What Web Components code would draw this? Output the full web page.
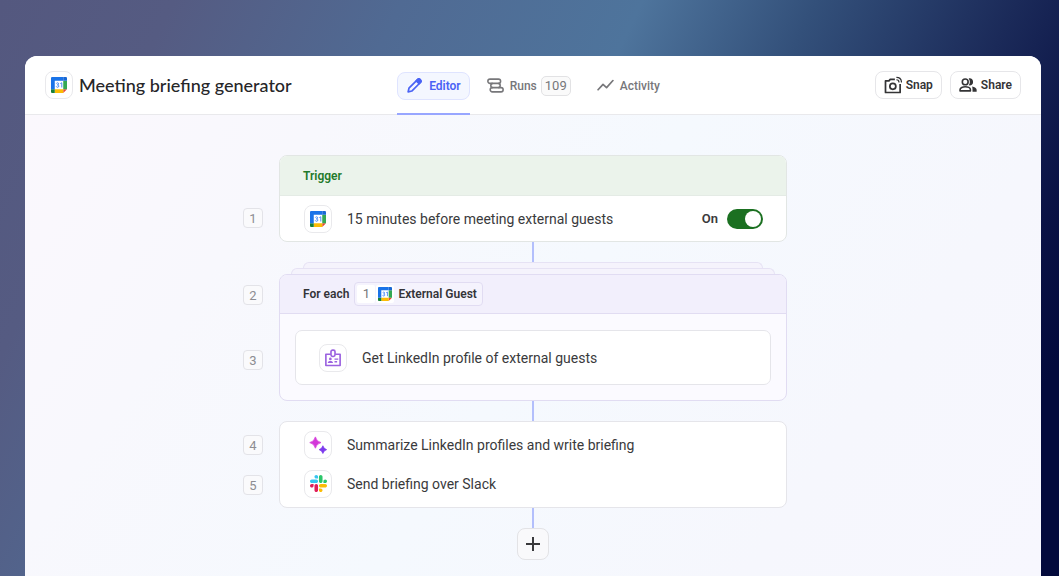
<!DOCTYPE html>
<html lang="en">
<head>
<meta charset="utf-8">
<meta name="viewport" content="width=device-width, initial-scale=1">
<title>Meeting briefing generator</title>
<style>
  html, body { margin: 0; }
  body {
    font-family: Roboto, "Noto Sans", sans-serif;
    font-size: 14px;
    line-height: 20px;
    color: #3a3a3c;
  }
</style>
</head>
<body>
<workflow-window>
  <window-header slot="header">
    <icon-tile slot="title" name="calendar"></icon-tile>
    <span slot="title">Meeting briefing generator</span>
    <nav-tab slot="tabs" icon="pencil" active>Editor</nav-tab>
    <nav-tab slot="tabs" icon="runs" count="109">Runs</nav-tab>
    <nav-tab slot="tabs" icon="activity">Activity</nav-tab>
    <action-button slot="actions" icon="snap">Snap</action-button>
    <action-button slot="actions" icon="share">Share</action-button>
  </window-header>

  <flow-block numbers="1" kind="trigger">
    <flow-card tone="green">
      <span slot="heading">Trigger</span>
      <step-row icon="calendar">15 minutes before meeting external guests
        <toggle-switch slot="end" checked>On</toggle-switch>
      </step-row>
    </flow-card>
  </flow-block>
  <flow-connector></flow-connector>
  <flow-block numbers="2 3" kind="loop">
    <flow-card tone="purple" stacked>
      <span slot="heading">For each</span>
      <value-token slot="heading" step="1" icon="calendar">External Guest</value-token>
      <step-row icon="badge" boxed>Get LinkedIn profile of external guests</step-row>
    </flow-card>
  </flow-block>
  <flow-connector></flow-connector>
  <flow-block numbers="4 5" kind="steps">
    <flow-card>
      <step-row icon="sparkle" compact>Summarize LinkedIn profiles and write briefing</step-row>
      <step-row icon="slack" compact>Send briefing over Slack</step-row>
    </flow-card>
  </flow-block>
  <flow-connector></flow-connector>
  <add-step></add-step>
</workflow-window>

<script>
const ICONS = {
  calendar: `<svg viewBox="0 0 200 200"><path fill="#fff" d="M47 47h106v106H47z"/><path fill="#ea4335" d="M153 200l47-47h-47z"/><path fill="#34a853" d="M200 47h-47v106h47z"/><path fill="#fbbc04" d="M153 153H47v47h106z"/><path fill="#188038" d="M0 153v31c0 9 7 16 16 16h31v-47z"/><path fill="#1967d2" d="M200 47V16c0-9-7-16-16-16h-31v47z"/><path fill="#1a73e8" d="M153 0H16C7 0 0 7 0 16v137h47V47h106z"/><path fill="none" stroke="#4285f4" stroke-width="12" d="M67 82c4-13 29-13 29 4 0 9-8 13-17 13 10 0 19 5 19 15 0 19-29 19-33 3M117 82l18-10v59"/></svg>`,
  pencil: `<svg viewBox="0 0 24 24" fill="none" stroke="currentColor" stroke-width="2.4" stroke-linejoin="round"><path d="M3 21l1.2-5.2L16.600 3.400a2.200 2.200 0 0 1 3.100 0l.9.9a2.200 2.200 0 0 1 0 3.100L8.200 19.800z"/><path fill="currentColor" d="M14.500 5.500l2.600-2.500c1.500-1.200 5.200 2.500 3.900 3.900l-2.500 2.600z"/></svg>`,
  runs: `<svg viewBox="0 0 24 24" fill="none" stroke="currentColor" stroke-width="2.2"><rect x="1.200" y="3" width="18" height="6" rx="3"/><rect x="4.500" y="15" width="18.300" height="6" rx="3"/><path d="M16 9c3.500.3 3.500 5.700 0 6M8 9c-3.500.3-3.500 5.700 0 6"/></svg>`,
  activity: `<svg viewBox="0 0 24 24" fill="none" stroke="currentColor" stroke-width="2.400" stroke-linejoin="round" stroke-linecap="round"><path d="M1.500 18l7-7.500 5 4.500L22.500 5"/></svg>`,
  snap: `<svg viewBox="0 0 24 24" fill="none" stroke="currentColor" stroke-width="2.300"><path stroke-linejoin="round" d="M14.500 4.500H8.300L6.600 6.500H2v15.500h19.500V10.500"/><circle cx="11.800" cy="13.800" r="4"/><path stroke-width="1.600" d="M16.500 5c2.200 0 3.500 1.300 3.500 3.500M16.500 1.700c4.200 0 6.800 2.700 6.800 6.800"/></svg>`,
  share: `<svg viewBox="0 0 26 24" fill="none" stroke="currentColor" stroke-width="2.300"><circle cx="9" cy="7.500" r="4.200"/><path stroke-linejoin="round" d="M1.500 20.500v-1.700c0-2.600 4-4.300 7.500-4.300s7.500 1.700 7.500 4.300v1.700z"/><path fill="currentColor" stroke="none" d="M14 2.500c3.500-.9 6.400 1.500 6.400 5s-2.900 5.900-6.400 5c2.300-3 2.300-7 0-10zM19 14c3.700.7 6.500 2.500 6.500 5v2.700h-6V19c0-2-.2-3.600-.5-5z"/></svg>`,
  badge: `<svg viewBox="0 0 24 24" fill="none" stroke="currentColor" stroke-width="2.200"><path stroke-linejoin="round" d="M9 7H2.500v15h19V7H15"/><rect x="9.300" y="1.500" width="5.400" height="8.500" rx="2.200"/><path stroke-width="1.700" d="M14 13.500h5M14 17h3.500"/><circle cx="8.500" cy="13.200" r="1.800" fill="currentColor" stroke="none"/><path fill="currentColor" stroke="none" d="M5 18.500c0-3.500 7-3.500 7 0z"/></svg>`,
  sparkle: `<svg viewBox="0 0 24 24"><path fill="#d336d9" stroke="#d336d9" stroke-linejoin="round" d="M8.500 1.200Q9.900 7.500 16 8.800Q9.900 10.200 8.500 16.300Q7 10.200 1 8.800Q7 7.500 8.500 1.200z"/><path fill="#7c3aed" stroke="#7c3aed" stroke-linejoin="round" d="M18.500 13Q19.500 17 23.500 18.200Q19.500 19.300 18.500 23.300Q17.500 19.300 13.500 18.200Q17.500 17 18.500 13z"/></svg>`,
  slack: `<svg viewBox="0 0 122.800 122.800"><path fill="#e01e5a" d="M25.800 77.600c0 7.100-5.800 12.900-12.900 12.900S0 84.700 0 77.600s5.800-12.900 12.900-12.900h12.900zm6.500 0c0-7.100 5.800-12.900 12.900-12.900s12.900 5.800 12.900 12.900v32.300c0 7.100-5.800 12.900-12.900 12.900s-12.900-5.800-12.900-12.900z"/><path fill="#36c5f0" d="M45.200 25.800c-7.100 0-12.900-5.800-12.900-12.900S38.100 0 45.200 0s12.900 5.800 12.900 12.900v12.900zm0 6.500c7.100 0 12.900 5.800 12.900 12.900s-5.800 12.900-12.900 12.900H12.900C5.800 58.100 0 52.300 0 45.200s5.800-12.900 12.900-12.900z"/><path fill="#2bc66a" d="M97 45.200c0-7.100 5.800-12.900 12.900-12.900s12.900 5.800 12.900 12.900-5.800 12.900-12.900 12.900H97zm-6.500 0c0 7.100-5.800 12.900-12.900 12.900s-12.900-5.800-12.900-12.900V12.900C64.700 5.800 70.500 0 77.600 0s12.900 5.800 12.900 12.900z"/><path fill="#fbbc04" d="M77.600 97c7.100 0 12.900 5.800 12.900 12.900s-5.800 12.900-12.900 12.900-12.900-5.800-12.900-12.900V97zm0-6.500c-7.100 0-12.900-5.800-12.900-12.900s5.800-12.900 12.900-12.900h32.300c7.100 0 12.900 5.800 12.900 12.900s-5.800 12.900-12.900 12.900z"/></svg>`,
  plus: `<svg viewBox="0 0 16 16" fill="none" stroke="currentColor" stroke-width="2"><path d="M8 1v14M1 8h14"/></svg>`
};

/* Shared base: renders the markup of the subclass into an open shadow root. */
class BaseElement extends HTMLElement {
  connectedCallback() {
    if (this.shadowRoot) return;
    const root = this.attachShadow({ mode: "open" });
    root.innerHTML = `<style>*{box-sizing:border-box}:host{box-sizing:border-box}</style>` + this.render();
  }
  attr(name) { return this.getAttribute(name) || ""; }
}

customElements.define("app-icon", class extends BaseElement {
  render() {
    return `<style>
      :host { display: block; flex: none; width: 18px; height: 18px; }
      svg { display: block; width: 100%; height: 100%; }
    </style>${ICONS[this.attr("name")]}`;
  }
});

customElements.define("icon-tile", class extends BaseElement {
  render() {
    const size = { calendar: 16, badge: 18, sparkle: 18, slack: 17 }[this.attr("name")];
    return `<style>
      :host { display: grid; place-items: center; flex: none; width: 28px; height: 28px;
        border: 1px solid #e9e9ec; border-radius: 8px; background: #fff; color: #9b62e0; }
      app-icon { width: ${size}px; height: ${size}px; }
    </style><app-icon name="${this.attr("name")}"></app-icon>`;
  }
});

customElements.define("workflow-window", class extends BaseElement {
  render() {
    return `<style>
      :host { display: flex; flex-direction: column; min-height: 100vh; padding: 56px 18px 0 25px;
        background: linear-gradient(116deg, #54587f 0%, #555b82 13%, #506a93 30%, #4e749c 48%, #33507a 61%, #1b2a59 76%, #0a1245 86%, #030a3c 92%, #030a3c 100%); }
      .window { flex: 1; display: flex; flex-direction: column; border-radius: 12px 12px 0 0; overflow: hidden; background: #fff; }
      main { flex: 1; padding: 40px 24px 16px;
        background: linear-gradient(125deg, #fbf8fd 0%, #f8f8fd 22%, #f5f9fe 50%, #f6f7fd 78%, #f7f7fe 100%); }
      .flow { display: flex; flex-direction: column; align-items: center; }
    </style>
    <div class="window"><slot name="header"></slot><main><div class="flow"><slot></slot></div></main></div>`;
  }
});

customElements.define("window-header", class extends BaseElement {
  render() {
    return `<style>
      :host { display: block; }
      header { display: grid; grid-template-columns: 1fr auto 1fr; align-items: stretch; height: 59px;
        padding: 0 20px; border-bottom: 1px solid #e9e9ec; background: #fff; }
      h1 { display: flex; align-items: center; gap: 6px; margin: 0;
        font: 500 18px/24px Lato, sans-serif; color: #262628; white-space: nowrap; }
      nav { display: flex; gap: 8px; margin-bottom: -1px; }
      .actions { display: flex; align-items: center; justify-content: flex-end; gap: 8px; }
    </style>
    <header><h1><slot name="title"></slot></h1><nav aria-label="Workflow"><slot name="tabs"></slot></nav>
    <div class="actions"><slot name="actions"></slot></div></header>`;
  }
});

customElements.define("nav-tab", class extends BaseElement {
  render() {
    const count = this.attr("count");
    return `<style>
      :host { display: flex; align-items: center; color: #77777a; border-bottom: 2px solid transparent; padding-top: 2px; }
      :host([active]) { color: #4a63f5; border-bottom-color: #98a6ff; }
      a { display: flex; align-items: center; height: 28px; padding: 0 8px; border: 1px solid transparent; border-radius: 8px;
        color: inherit; text-decoration: none; font-size: 12px; line-height: 16px; font-weight: 500; }
      :host([active]) a { background: #f4f7ff; border-color: #dfe4ff; font-weight: 600; }
      app-icon { margin-right: 6px; width: 17px; height: 17px; }
      .count { margin-left: 4px; padding: 0 3px; height: 20px; border: 1px solid #e2e2e4; border-radius: 5px; background: #fafafa;
        font-weight: 400; font-size: 13px; line-height: 18px; }
    </style>
    <a href="#"${this.hasAttribute("active") ? ' aria-current="page"' : ""}><app-icon name="${this.attr("icon")}"></app-icon><slot></slot>${count ? `<span class="count">${count}</span>` : ""}</a>`;
  }
});

customElements.define("action-button", class extends BaseElement {
  render() {
    return `<style>
      :host { display: block; }
      button { display: flex; align-items: center; gap: 4px; height: 28px; padding: 0 8px; border: 1px solid #e6e6e9; border-radius: 8px;
        background: #fff; color: #343436; font: 600 12px/16px Roboto, sans-serif; }
      app-icon { width: 18px; height: 18px; }
    </style>
    <button type="button"><app-icon name="${this.attr("icon")}"></app-icon><slot></slot></button>`;
  }
});

/* A card with its step numbers in a gutter on the left. */
customElements.define("flow-block", class extends BaseElement {
  render() {
    const numbers = this.attr("numbers").split(" ");
    return `<style>
      :host { display: grid; grid-template-columns: 20px minmax(0, 508px) 20px; gap: 16px; max-width: 100%; width: 580px; }
      ol { display: flex; flex-direction: column; list-style: none; margin: 0; padding: 53px 0 0; }
      :host([kind="loop"]) ol { padding-top: 23px; gap: 45px; }
      :host([kind="steps"]) ol { padding-top: 14px; gap: 20px; }
      li { height: 20px; border: 1px solid #e3e3e8; border-radius: 4px; background: #fafafc;
        color: #8d8d92; font-size: 13px; line-height: 19px; text-align: center; }
    </style>
    <ol>${numbers.map(n => `<li>${n}</li>`).join("")}</ol><slot></slot>`;
  }
});

customElements.define("flow-card", class extends BaseElement {
  render() {
    const heading = this.hasAttribute("tone") ? `<header><slot name="heading"></slot></header>` : "";
    const stack = this.hasAttribute("stacked") ? `<div class="layer far"></div><div class="layer near"></div>` : "";
    return `<style>
      :host { display: block; --line: #e5e5ea; --fill: #fff; }
      :host([tone="green"]) { --head: #ebf3eb; --head-text: #237a2b; --line: #e2e6e4; }
      :host([tone="purple"]) { --head: #f2effc; --head-text: #343438; --line: #e1dcf2; --fill: #fbfaff; }
      .layer { height: 6px; border: 1px solid #e6e2f4; border-bottom: 0; border-radius: 6px 6px 0 0; background: #f5f3fc; }
      .far { margin: 0 24px; }
      .near { margin: 0 12px; }
      .card { border: 1px solid var(--line); border-radius: 8px; background: var(--fill); overflow: hidden; }
      header { display: flex; align-items: center; gap: 5px; height: 40px; padding: 0 23px;
        border-bottom: 1px solid var(--line); background: var(--head); color: var(--head-text);
        font-size: 12px; line-height: 16px; font-weight: 600; }
      :host([tone="green"]) header { border-bottom-color: #e4ebe5; }
      :host([stacked]) header { height: 39px; }
      :host([stacked]) .body { padding: 16px 15px 15px; }
      :host(:not([tone])) .body { padding: 3px 0 4px; }
    </style>
    ${stack}<section class="card">${heading}<div class="body"><slot></slot></div></section>`;
  }
});

customElements.define("step-row", class extends BaseElement {
  render() {
    return `<style>
      :host { display: flex; align-items: center; gap: 15px; height: 45px; padding: 0 23px 0 24px; }
      :host([compact]) { height: 39px; }
      :host([boxed]) { height: 55px; padding: 0 23px; border: 1px solid #e5e5ea; border-radius: 7px; background: #fff; }
      .text { flex: 1; min-width: 0; }
    </style>
    <icon-tile name="${this.attr("icon")}"></icon-tile><span class="text"><slot></slot></span><slot name="end"></slot>`;
  }
});

customElements.define("toggle-switch", class extends BaseElement {
  render() {
    return `<style>
      :host { display: block; }
      label { display: flex; align-items: center; gap: 9px; font-weight: 600; font-size: 13px; }
      input { appearance: none; display: flex; align-items: center; width: 36px; height: 20px; margin: 0; padding: 0 2px;
        border-radius: 10px; background: #b9b9bd; }
      input::before { content: ""; width: 16px; height: 16px; border-radius: 50%; background: #fff; }
      input:checked { justify-content: flex-end; background: #1b7021; }
    </style>
    <label><slot></slot><input type="checkbox" role="switch"${this.hasAttribute("checked") ? " checked" : ""}></label>`;
  }
});

customElements.define("value-token", class extends BaseElement {
  render() {
    return `<style>
      :host { display: flex; align-items: center; gap: 1px; height: 24px; padding: 0 5px 0 2px;
        border: 1px solid #e1dcf2; border-radius: 4px; background: #f5f3fd; }
      .cell { display: grid; place-items: center; width: 18px; height: 18px; border-radius: 2px; background: #fff;
        color: #77777a; font-weight: 400; font-size: 13px; }
      .label { padding-left: 3px; }
      app-icon { width: 14px; height: 14px; }
    </style>
    <span class="cell">${this.attr("step")}</span><span class="cell"><app-icon name="${this.attr("icon")}"></app-icon></span><span class="label"><slot></slot></span>`;
  }
});

customElements.define("flow-connector", class extends BaseElement {
  render() {
    return `<style>:host { display: block; width: 2px; height: 20px; background: #b3bffc; }</style>`;
  }
});

customElements.define("add-step", class extends BaseElement {
  render() {
    return `<style>
      :host { display: block; }
      button { display: grid; place-items: center; width: 32px; height: 32px; padding: 0; border: 1px solid #e3e3e6; border-radius: 8px;
        background: #f9f9fb; color: #39393c; }
      app-icon { width: 16px; height: 16px; }
    </style>
    <button type="button" aria-label="Add step"><app-icon name="plus"></app-icon></button>`;
  }
});
</script>
</body>
</html>
